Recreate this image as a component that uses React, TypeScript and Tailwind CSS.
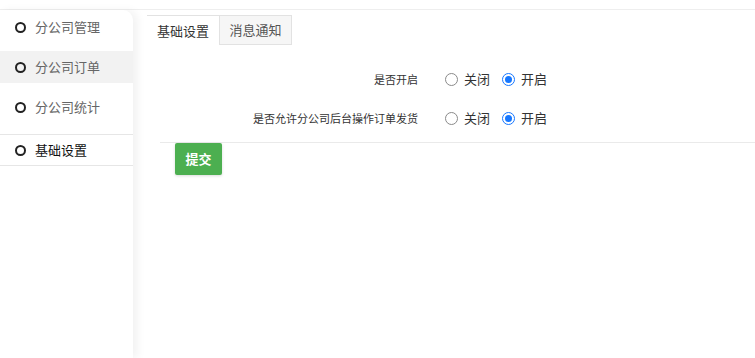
import React from "react";

const font = { fontFamily: '"Noto Sans CJK SC", "Noto Sans", sans-serif' };

function Circle() {
  return <span className="inline-block w-[11px] h-[11px] rounded-full border-2 border-[#222]" />;
}

function Radio({ checked, label }: { checked?: boolean; label: string }) {
  return (
    <label className="flex items-center gap-[6px] text-[13px] text-[#333]">
      {checked ? (
        <span className="w-[13px] h-[13px] rounded-full border border-[#1677ff] flex items-center justify-center bg-white">
          <span className="w-[7px] h-[7px] rounded-full bg-[#1677ff]" />
        </span>
      ) : (
        <span className="w-[13px] h-[13px] rounded-full border border-[#8a8a8a] bg-white" />
      )}
      <span>{label}</span>
    </label>
  );
}

export default function App() {
  const items = ["分公司管理", "分公司订单", "分公司统计"];
  return (
    <div className="w-[755px] h-[358px] bg-white flex flex-col overflow-hidden" style={font}>
      <div className="h-[10px] shrink-0 border-b border-[#eeeeee]" />
      <div className="flex flex-1 min-h-0">
        <aside className="w-[133px] shrink-0 rounded-tr-[10px] bg-white shadow-[5px_0_8px_rgba(0,0,0,0.05)] pt-[1px] flex flex-col">
          <div className="flex flex-col gap-[8px]">
            {items.map((t, i) => (
              <div
                key={t}
                className={`h-[32px] flex items-center pl-[15px] gap-[9px] ${i === 1 ? "bg-[#f2f2f2]" : ""}`}
              >
                <Circle />
                <span className="text-[13px] text-[#666]">{t}</span>
              </div>
            ))}
          </div>
          <div className="mt-[11px] h-[32px] border-y border-[#e6e6e6] flex items-center pl-[15px] gap-[9px]">
            <Circle />
            <span className="text-[13px] text-[#111]">基础设置</span>
          </div>
        </aside>
        <main className="flex-1 pl-[14px] pt-[5px] flex flex-col">
          <div className="flex h-[30px]">
            <div className="w-[72px] border-t border-[#e2e2e2] flex items-center justify-center text-[13px] text-[#333]">
              基础设置
            </div>
            <div className="w-[73px] border border-[#e2e2e2] bg-[#f6f6f6] flex items-center justify-center text-[13px] text-[#555]">
              消息通知
            </div>
          </div>
          <div className="flex flex-col mt-[25px] gap-[21px] pl-[13px]">
            <div className="flex items-center h-[18px]">
              <div className="w-[258px] text-right text-[11px] text-[#333]">是否开启</div>
              <div className="flex items-center gap-[12px] ml-[27px]">
                <Radio label="关闭" />
                <Radio checked label="开启" />
              </div>
            </div>
            <div className="flex items-center h-[18px]">
              <div className="w-[258px] text-right text-[11px] text-[#333]">是否允许分公司后台操作订单发货</div>
              <div className="flex items-center gap-[12px] ml-[27px]">
                <Radio label="关闭" />
                <Radio checked label="开启" />
              </div>
            </div>
          </div>
          <div className="mt-[15px] ml-[13px] border-t border-[#eaeaea]">
            <button className="ml-[15px] w-[47px] h-[32px] rounded-[2px] bg-[#4caf50] text-white text-[13px] font-bold shadow-[0_1px_3px_rgba(0,0,0,0.15)]">
              提交
            </button>
          </div>
        </main>
      </div>
    </div>
  );
}
